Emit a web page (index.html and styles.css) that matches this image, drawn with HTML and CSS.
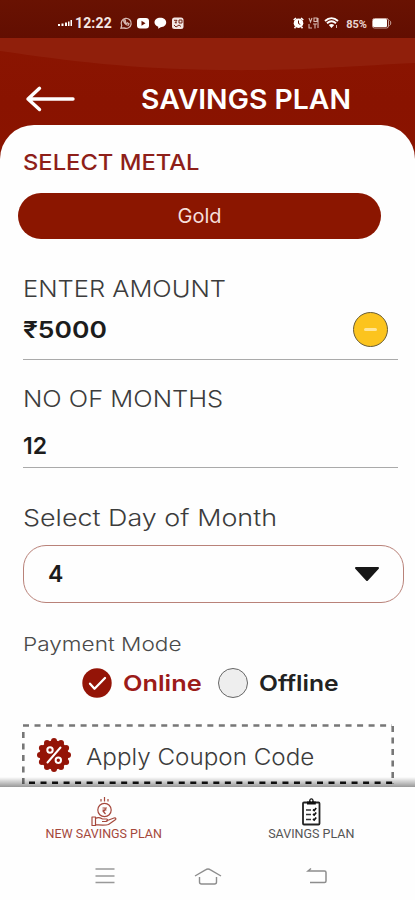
FILE: index.html
```html
<!DOCTYPE html>
<html lang="en">
<head>
<meta charset="utf-8">
<title>Savings Plan</title>
<link rel="stylesheet" href="styles.css">
</head>
<body>
<div class="phone">
  <header class="hero">
    <svg class="waves" viewBox="0 0 415 170" preserveAspectRatio="none">
      <path d="M0 38H415V63C350 66 305 71 220 70C130 69 70 61 0 51Z" fill="#901f0b"/>
    </svg>
    <div class="status">
      <div class="status-left">
        <svg width="16" height="10" viewBox="0 0 16 10" fill="#fff"><path d="M1 6h2v2H1zM4.500 5.500h2V8h-2zM8 4.500h2V8H8zM11 3.500h1.500V8H11zM13.500 2H15v6h-1.500z"/></svg>
        <span class="clock">12:22</span>
        <svg class="app-icons" width="66" height="14" viewBox="0 0 66 14">
          <g fill="none" stroke="#d7b9b2" stroke-width="1.300"><path d="M2 12.200l.7-2.700A5 5 0 1 1 5 11.800z"/><path d="M4.700 4c-.4 2.500 2.300 5.400 4.800 5l.5-1.300-1.700-.9-.8.800L5.900 6l.7-.8-.7-1.500z"/></g>
          <rect x="18" y="2" width="12" height="10.500" rx="3" fill="#fff"/><path d="M22.500 4.700v5l4-2.500z" fill="#641000"/>
          <path d="M41.200 1.800c3.500 0 6 2 6 4.700s-2.500 4.700-5.500 4.700l-2.600 1.600.2-2.100c-2.300-.8-3.800-2.400-3.800-4.200 0-2.700 2.500-4.700 5.700-4.700z" fill="#fff"/>
          <rect x="53" y="1.500" width="11.500" height="11.500" rx="2.500" fill="#f2e6e3"/><path d="M55 4.300h3l-2 2.500h2M60 4v3h3V4zM55 9l2 2 3-2 2 1.500" fill="none" stroke="#641000" stroke-width=".9"/>
        </svg>
      </div>
      <div class="status-right">
        <svg width="47" height="14" viewBox="0 0 47 14">
          <circle cx="6.500" cy="7.200" r="4.800" fill="#fff"/><path d="M1.700 4L4 2M9 2l2.300 2M3.500 11l-1 1.200M9.500 11l1 1.200" stroke="#fff" stroke-width="1.600"/><path d="M6.500 4.500v3l1.800 1" fill="none" stroke="#641000" stroke-width="1"/>
          <path d="M17 2l1.500 4L20 2M22 2h3v3.500h-3zM17 8v4h3M21 8h4M23 8v4.500M26 2v10" fill="none" stroke="#d7b9b2" stroke-width="1.100"/>
          <path d="M33 5c4-3.700 9-3.700 13 0M35 7.300c2.700-2.400 6.300-2.400 9 0" fill="none" stroke="#fff" stroke-width="1.900"/><path d="M36.800 9c1.800-1.500 3.600-1.500 5.400 0l-2.700 3z" fill="#fff"/><path d="M44.500 9v3" stroke="#d7b9b2"/>
        </svg>
        <span class="battery-text">85%</span>
        <svg width="20" height="12" viewBox="0 0 20 12"><rect x=".5" y="1.500" width="16" height="9.500" rx="2" fill="none" stroke="#c9a39b"/><rect x="1" y="2" width="14" height="8" rx="1" fill="#fff"/><path d="M17.500 3.500c1.700.2 1.700 4.800 0 5" fill="none" stroke="#c9a39b"/></svg>
      </div>
    </div>
    <div class="title-row">
      <svg class="back" width="50" height="28" viewBox="0 0 50 28" fill="none" stroke="#fff" stroke-width="3.400" stroke-linecap="round" stroke-linejoin="round"><path d="M48 14H3M14.500 3.300L3 14l11.500 10.500"/></svg>
      <h1 class="title">SAVINGS PLAN</h1>
    </div>
  </header>

  <main class="sheet">
    <h2 class="metal-label">SELECT METAL</h2>
    <button class="metal-btn"><span>Gold</span></button>
    <section class="field amount">
      <span class="label enter">ENTER AMOUNT</span>
      <div class="value-row"><span class="value rupees">₹5000</span><span class="minus"></span></div>
    </section>
    <section class="field months">
      <span class="label no-of">NO OF MONTHS</span>
      <div class="value-row"><span class="value twelve">12</span></div>
    </section>
    <span class="label day-label">Select Day of Month</span>
    <div class="select">
      <span class="value">4</span>
      <svg width="26" height="16" viewBox="0 0 26 16"><path d="M2 2h22L13 14z" fill="#171717" stroke="#171717" stroke-width="2" stroke-linejoin="round"/></svg>
    </div>
    <span class="pay-label">Payment Mode</span>
    <div class="modes">
      <svg width="30" height="30" viewBox="0 0 30 30"><circle cx="15" cy="15" r="14.700" fill="#941407"/><path d="M8 15.700l4.500 5L23 10" fill="none" stroke="#fff" stroke-width="2.300" stroke-linecap="round" stroke-linejoin="round"/></svg>
      <span class="mode online">Online</span>
      <span class="radio"></span>
      <span class="mode offline">Offline</span>
    </div>
    <div class="coupon">
      <svg class="dashes" width="372" height="60" viewBox="0 0 372 60" fill="none" stroke-width="2.600">
        <path d="M1 1.500H370" stroke="#777" stroke-dasharray="6 5.520"/>
        <path d="M1.300 8V60M370.700 2V60" stroke="#777" stroke-dasharray="6 5.500"/>
        <path d="M7 58.700H372" stroke="#111" stroke-dasharray="6 5.520"/>
      </svg>
      <svg class="badge" width="34" height="34" viewBox="-17 -17 34 34">
        <g fill="#941407"><circle r="14.600"/>
          <circle cy="-14" r="3"/><circle cy="14" r="3"/><circle cx="14" r="3"/><circle cx="-14" r="3"/>
          <circle cx="7" cy="-12.100" r="3"/><circle cx="12.100" cy="-7" r="3"/><circle cx="12.100" cy="7" r="3"/><circle cx="7" cy="12.100" r="3"/>
          <circle cx="-7" cy="-12.100" r="3"/><circle cx="-12.100" cy="-7" r="3"/><circle cx="-12.100" cy="7" r="3"/><circle cx="-7" cy="12.100" r="3"/></g>
        <g fill="none" stroke="#fff" stroke-width="2"><path d="M6.500-7.500L-6.500 7.500" stroke-linecap="round"/><circle cx="-4" cy="-5" r="2.700"/><circle cx="4.300" cy="5.200" r="2.700"/></g>
      </svg>
      <span class="label apply">Apply Coupon Code</span>
    </div>
  </main>

  <nav class="tabs">
    <div class="tab active">
      <svg width="28" height="30" viewBox="0 0 28 30" fill="none" stroke="#a5483c" stroke-width="1.200" stroke-linejoin="round">
        <circle cx="14.500" cy="13" r="6.700"/><path d="M12.500 11h4.500M12.500 13h4M15 11c1 2-1 3-2 3l2.500 3M14.500 0v4.500M11 2v2.500M18 2v2.500"/>
        <path d="M2 20h3.500v8.500H2zM5.500 21.500c3-2 5-.6 7 .5h4c1.700.4 1 2.500-.5 2.500h-4M16 24l8-3c2-.5 2.500 1 1 2l-6.500 4.500c-3 1-8 .5-13 .3"/>
      </svg>
      <span class="tab-text new-plan">NEW SAVINGS PLAN</span>
    </div>
    <div class="tab">
      <svg width="22" height="30" viewBox="0 0 22 30"><rect x="3" y="5.500" width="16.500" height="22" rx="1" fill="#fff" stroke="#222" stroke-width="1.800"/><path d="M7 7.500V4.500h2C9 0 13.800 0 13.800 4.500h2v3z" fill="#111"/><circle cx="11.400" cy="3.600" r="1" fill="#fff"/><path d="M6 13h5M6 17.500h5M6 22.500h5" stroke="#333" stroke-width="1.700"/><path d="M13 12.500l1.200 1 2-2.500M13 17l1.200 1 2-2.500M13 22l1.200 1 2-2.500" fill="none" stroke="#111" stroke-width="1.700"/></svg>
      <span class="tab-text plan">SAVINGS PLAN</span>
    </div>
  </nav>
  <footer class="sysnav">
    <svg width="20" height="18" viewBox="0 0 20 18" stroke="#999" stroke-width="1.600"><path d="M.5 2h19M.5 9h19M.5 15.500h19"/></svg>
    <svg class="home" width="28" height="20" viewBox="0 0 28 20" fill="none" stroke="#8d8d8d" stroke-width="1.400" stroke-linejoin="round"><path d="M1 9L11.500 2.800Q14 1.200 16.500 2.800L27 9M5.500 10v5q0 2 2 2h13q2 0 2-2v-5"/></svg>
    <svg width="22" height="18" viewBox="0 0 22 18" fill="none" stroke="#8d8d8d" stroke-width="1.500"><path d="M5 1.500L2 4H18.500q1.500 0 1.500 1.500v8.500q0 1.500-1.500 1.500H4"/></svg>
  </footer>
</div>
</body>
</html>
```
FILE: styles.css
```css
* { box-sizing: border-box; }
body { margin: 0; background: #fff; font-family: Inter, "Liberation Sans", sans-serif; color: #222; }
.phone { width: 415px; height: 900px; display: flex; flex-direction: column; overflow: hidden; background: #fefefe; }
svg { display: block; flex: none; }
span, h1, h2 { white-space: nowrap; transform-origin: left center; }

.hero { position: relative; height: 170px; margin-bottom: -45px; flex: none; background: linear-gradient(#8b1602, #891300 60%, #8b1400); }
.waves { position: absolute; left: 0; top: 0; width: 100%; height: 100%; }
.status { position: relative; height: 38px; background: linear-gradient(#691202, #620e01); display: flex; justify-content: space-between; padding: 8px 23px 0 57px; }
.status-left, .status-right { display: flex; align-items: center; height: 30px; }
.clock { font: 700 14px Roboto, sans-serif; color: #f5e7e4; letter-spacing: .15px; margin-left: 2px; }
.app-icons { margin-left: 7px; }
.battery-text { font: 700 11px Roboto, sans-serif; color: #ead5d0; margin: 2px 5px 0 7px; }
.title-row { position: relative; display: flex; align-items: center; height: 60px; padding: 0 0 0 25px; margin-top: 31px; }
.title { margin: 2px 0 0 66px; font-size: 27px; line-height: 32px; font-weight: 600; color: #fff; transform: scaleX(1.05); }

.sheet { position: relative; height: 662px; flex: none; background: #fefefe; border-radius: 34px 34px 0 0; padding: 23px 11px 0 23px; display: flex; flex-direction: column; }
.metal-label { margin: 0; font-size: 22px; line-height: 28px; font-weight: 500; color: #8e1f19; transform: scaleX(1.08); }
.metal-btn { font-family: inherit; border: 0; margin: 17px 0 0 -5px; width: 363px; height: 46px; flex: none; border-radius: 23px; background: #8b1600; color: #f6dfdb; font-size: 20px; padding: 0; }
.field { width: 375px; border-bottom: 1.500px solid #aaa; display: flex; flex-direction: column; }
.amount { margin-top: 35px; height: 86px; }
.months { margin-top: 24px; height: 84px; }
.label { font-size: 23px; line-height: 30px; font-weight: 300; color: #3c3c3c; }
.enter, .no-of { transform: scaleX(1.108); }
.value { font-size: 23px; line-height: 28px; font-weight: 600; color: #1c1c1c; }
.value-row { display: flex; justify-content: space-between; align-items: center; }
.amount .value-row { margin-top: 8px; height: 34px; margin-right: 10px; }
.rupees { margin-top: 2px; transform: scaleX(1.15); }
.months .value-row { margin-top: 17px; height: 30px; }
.minus { width: 35px; height: 35px; border-radius: 50%; border: 1px solid #685d38; background: #fcc41e; display: flex; align-items: center; justify-content: center; }
.minus::before { content: ""; width: 13px; height: 3px; border-radius: 2px; background: #ffe598; }
.day-label { margin-top: 35px; transform: scaleX(1.17); }
.select { margin-top: 12px; width: 381px; height: 58px; flex: none; border: 1.500px solid #b98279; border-radius: 23px; display: flex; align-items: center; justify-content: space-between; padding: 0 23px 0 24px; }
.pay-label { margin-top: 29px; font-size: 19px; line-height: 26px; font-weight: 300; color: #4a4a4a; transform: scaleX(1.19); }
.modes { display: flex; align-items: center; height: 30px; margin: 10px 0 0 59px; }
.mode { font-size: 22px; line-height: 30px; font-weight: 600; }
.online { color: #9c1b19; margin-left: 11px; width: 95px; transform: scaleX(1.15); }
.radio { width: 30px; height: 30px; border: 1px solid #666; border-radius: 50%; background: #eee; }
.offline { margin-left: 11px; transform: scaleX(1.12); }
.coupon { position: relative; width: 372px; height: 60px; flex: none; margin: 26px 0 0 -1px; display: flex; align-items: center; padding: 2px 0 0 15px; }
.dashes { position: absolute; left: 0; top: 0; }
.apply { margin: 3px 0 0 15px; transform: scaleX(1.053); }
.sheet::after { content: ""; position: absolute; left: 0; right: 0; bottom: 0; height: 10px; background: linear-gradient(transparent, #0006); }

.tabs { position: relative; flex: none; height: 60px; background: #fefefe; display: flex; }
.tab { width: 207.500px; display: flex; flex-direction: column; align-items: center; padding-top: 10px; color: #555; }
.tab svg { height: 30px; }
.tab-text { font: 400 12.500px/14px Roboto, sans-serif; }
.active { color: #a5483c; }
.sysnav { flex: none; height: 53px; display: flex; justify-content: space-between; padding: 20px 87px 0 95px; background: #fefefe; }
.home { margin-right: 5px; }
```
